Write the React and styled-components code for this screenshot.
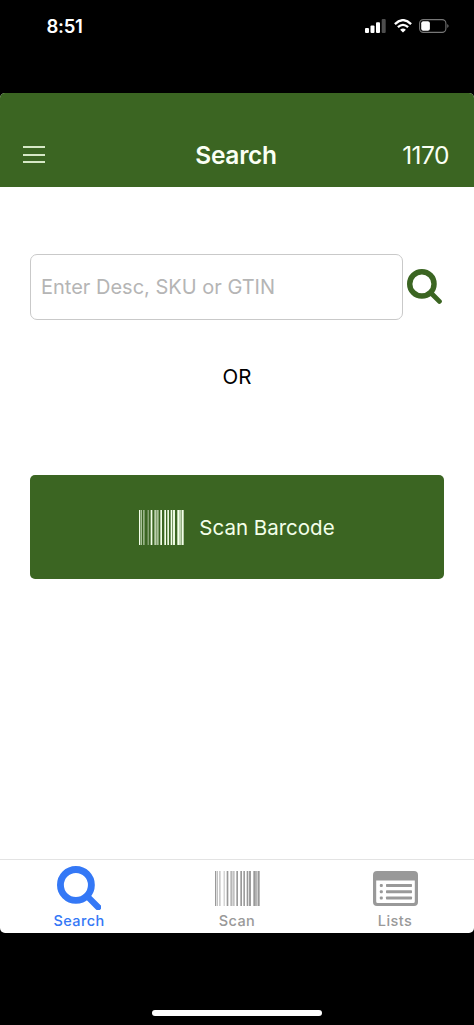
import React, { useState } from 'react';
import styled, { createGlobalStyle } from 'styled-components';

const GREEN = '#3b6522';

// x, width, opacity of each stripe
const STRIPES = [
  [0, 4, 1], [6, 3, 0.6], [12, 5, 0.5], [26, 3, 0.6], [35, 5, 1],
  [46, 5, 0.7], [52, 7, 0.6], [64, 5, 1], [76, 5, 1], [85, 5, 0.95],
  [95, 5, 1], [102, 6, 0.95], [115, 7, 1], [122, 6, 0.7], [129, 5, 1],
];

const BarcodeIcon = () => (
  <svg width="45" height="35" viewBox="0 0 135 105" fill="currentColor">
    {STRIPES.map(([x, w, o]) => (
      <rect key={x} x={x} y="0" width={w} height="105" opacity={o} />
    ))}
  </svg>
);

const SearchIcon = ({ size }) => (
  <svg width={size} height={size} viewBox="0 0 44 44" fill="none" stroke="currentColor">
    <circle cx="18.7" cy="18.7" r="15.3" strokeWidth="6.8" />
    <path d="M30.5 30.5L40.7 40.7" strokeWidth="6.2" strokeLinecap="round" />
  </svg>
);

const ListIcon = () => (
  <svg width="45" height="35" viewBox="0 0 45 35">
    <path
      fill="currentColor"
      fillRule="evenodd"
      d="M4 0H41Q45 0 45 4V31Q45 35 41 35H4Q0 35 0 31V4Q0 0 4 0ZM3.2 9.5V30.5Q3.2 32 4.7 32H40.3Q41.8 32 41.8 30.5V9.5Z"
    />
    {[12.9, 19.2, 25.5].map((y) => (
      <g key={y} fill="currentColor">
        <rect x="6.8" y={y} width="3" height="3" rx="1" />
        <rect x="13" y={y} width="26" height="3" rx="0.7" />
      </g>
    ))}
  </svg>
);

const tabs = [
  { id: 'search', label: 'Search', icon: <SearchIcon size={44.5} /> },
  { id: 'scan', label: 'Scan', icon: <BarcodeIcon /> },
  { id: 'lists', label: 'Lists', icon: <ListIcon /> },
];

const App = () => {
  const [activeTab, setActiveTab] = useState('search');
  const [query, setQuery] = useState('');

  return (
    <Phone>
      <GlobalStyle />
      <StatusBar>
        <Clock>8:51</Clock>
        <StatusIcons>
          <svg width="21" height="14" viewBox="0 0 21 14" fill="#fff">
            <rect x="0" y="9" width="4" height="5" rx="1" />
            <rect x="5.5" y="6.5" width="4" height="7.5" rx="1" />
            <rect x="11" y="3.3" width="4" height="10.7" rx="1" />
            <rect x="16.7" y="0" width="4" height="14" rx="1" opacity="0.3" />
          </svg>
          <svg width="18" height="14" viewBox="0 0 18 14" fill="none" stroke="#fff" strokeWidth="2.3">
            <path d="M.9 5.1Q9-2.8 17.1 5.1" />
            <path d="M3.9 8.2Q9 3.5 14.1 8.2" />
            <path d="M9 13.5L6.1 10.7Q9 8.2 11.9 10.7Z" fill="#fff" stroke="none" />
          </svg>
          <svg width="30" height="14" viewBox="0 0 30 14">
            <rect x=".6" y=".6" width="26.3" height="12.8" rx="3.8" fill="none" stroke="#777" strokeWidth="1.1" />
            <rect x="2.2" y="2.2" width="8.7" height="9.6" rx="2" fill="#fff" />
            <path d="M28.3 4.9Q30.8 7 28.3 9.1Z" fill="#777" />
          </svg>
        </StatusIcons>
      </StatusBar>

      <Screen>
        <Header>
          <MenuButton aria-label="Menu">
            <span />
            <span />
            <span />
          </MenuButton>
          <Title>Search</Title>
          <StoreNumber>1170</StoreNumber>
        </Header>

        <Content>
          <SearchRow>
            <SearchInput
              placeholder="Enter Desc, SKU or GTIN"
              value={query}
              onChange={(e) => setQuery(e.target.value)}
            />
            <SearchButton aria-label="Search">
              <SearchIcon size={35} />
            </SearchButton>
          </SearchRow>
          <Divider>OR</Divider>
          <ScanButton>
            <BarcodeIcon />
            <span>Scan Barcode</span>
          </ScanButton>
        </Content>

        <TabBar>
          {tabs.map((tab) => (
            <Tab key={tab.id} $active={tab.id === activeTab} onClick={() => setActiveTab(tab.id)}>
              <TabIcon>{tab.icon}</TabIcon>
              <TabLabel>{tab.label}</TabLabel>
            </Tab>
          ))}
        </TabBar>
      </Screen>

      <HomeArea>
        <HomeIndicator />
      </HomeArea>
    </Phone>
  );
};

/* --- styles --- */
const GlobalStyle = createGlobalStyle`
  * { box-sizing: border-box; }
  body { margin: 0; background: #000; }
  button, input { font-family: inherit; }
  svg { display: block; flex-shrink: 0; }
`;

const Phone = styled.div`
  display: flex;
  flex-direction: column;
  width: 474px;
  height: 1025px;
  overflow: hidden;
  background: #000;
  font-family: Inter, sans-serif;
`;

const StatusBar = styled.div`
  display: flex;
  justify-content: space-between;
  align-items: flex-start;
  height: 92.5px;
  padding: 15px 25px 0 46.5px;
  color: #fff;
`;

const Clock = styled.div`
  font-size: 18.5px;
  font-weight: 600;
  line-height: 23px;
  letter-spacing: -0.3px;
`;

const StatusIcons = styled.div`
  display: flex;
  gap: 7.5px;
  padding-top: 4px;
`;

const Screen = styled.div`
  display: flex;
  flex-direction: column;
  height: 840px;
  border-radius: 5px;
  overflow: hidden;
  background: #fff;
`;

const Header = styled.header`
  display: grid;
  grid-template-columns: 1fr auto 1fr;
  align-items: center;
  height: 94.5px;
  padding: 30px 25px 0 23px;
  background: ${GREEN};
  color: #fafff4;
`;

const MenuButton = styled.button`
  display: flex;
  flex-direction: column;
  gap: 5.5px;
  width: 22px;
  padding: 0;
  border: none;
  background: none;
  span { height: 2px; background: #d6e8c6; }
`;

const Title = styled.h1`
  margin: 0;
  font-size: 24.5px;
  font-weight: 600;
  line-height: 30px;
  letter-spacing: -0.3px;
`;

const StoreNumber = styled.div`
  text-align: right;
  font-size: 24.5px;
  line-height: 30px;
  letter-spacing: -0.5px;
`;

const Content = styled.main`
  flex: 1;
  padding: 66.5px 30px 0;
`;

const SearchRow = styled.div`
  display: flex;
  align-items: center;
  gap: 4px;
  margin-right: -4px;
`;

const SearchInput = styled.input`
  width: 373px;
  height: 66.5px;
  padding: 0 10px;
  border: 1.5px solid #c9c9c9;
  border-radius: 7px;
  outline: none;
  color: #000;
  font-size: 20px;
  &::placeholder { color: #b5b5b5; opacity: 1; }
`;

const SearchButton = styled.button`
  padding: 0;
  border: none;
  background: none;
  color: ${GREEN};
`;

const Divider = styled.div`
  padding: 44px 0 85px;
  text-align: center;
  font-size: 20.5px;
  line-height: 26px;
  color: #000;
`;

const ScanButton = styled.button`
  display: flex;
  align-items: center;
  justify-content: center;
  gap: 15px;
  width: 100%;
  height: 104px;
  padding: 0;
  border: none;
  border-radius: 5px;
  background: ${GREEN};
  color: #f3ffe9;
  font-size: 20.5px;
`;

const TabBar = styled.nav`
  display: grid;
  grid-template-columns: repeat(3, 1fr);
  height: 73.5px;
  border-top: 1.5px solid #e3e3e3;
`;

const Tab = styled.button`
  display: flex;
  flex-direction: column;
  align-items: center;
  padding: 5px 0 0;
  border: none;
  background: none;
  color: ${(props) => (props.$active ? '#3478f6' : '#999')};
`;

const TabIcon = styled.div`
  display: flex;
  align-items: center;
  height: 46px;
`;

const TabLabel = styled.div`
  font-size: 14.5px;
  font-weight: 500;
  line-height: 20px;
  letter-spacing: 0.4px;
`;

const HomeArea = styled.div`
  display: flex;
  flex: 1;
  align-items: flex-end;
  justify-content: center;
  padding-bottom: 9px;
`;

const HomeIndicator = styled.div`
  width: 170px;
  height: 6px;
  border-radius: 3px;
  background: #fff;
`;

export default App;
